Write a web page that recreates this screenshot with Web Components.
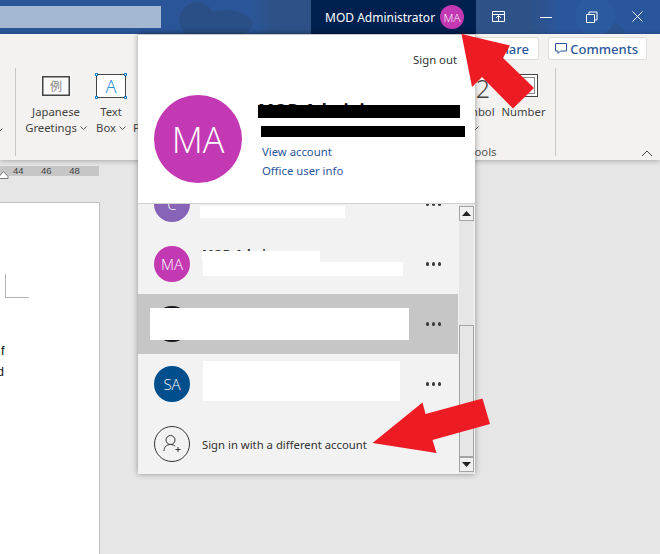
<!DOCTYPE html>
<html lang="en"><head><meta charset="utf-8"><title>Word account menu</title>
<style>
html,body{margin:0;padding:0;width:660px;height:554px;overflow:hidden;background:#e6e6e6}
body{font-family:"Noto Sans","Open Sans",sans-serif}
</style></head>
<body>
<app-shell>
  <title-bar></title-bar>
  <ribbon-bar></ribbon-bar>
  <doc-area></doc-area>
  <account-popup></account-popup>
  <red-arrows></red-arrows>
</app-shell>
<script>
function def(name, css, html, init){
  customElements.define(name, class extends HTMLElement{
    constructor(){super();const r=this.attachShadow({mode:'open'});r.innerHTML='<style>'+css+'</style>'+(typeof html==='function'?html(this):html);}
    connectedCallback(){ if(init) init(this); }
  });
}
const chev='<svg width="7" height="4" viewBox="0 0 7 4" style="vertical-align:2px"><path d="M.5.5l3 3 3-3" fill="none" stroke="#555" stroke-width="1"/></svg>';

def('app-shell',`:host{display:flex;flex-direction:column;position:relative;width:660px;height:554px;overflow:hidden}`,`<slot></slot>`);

def('user-avatar',`:host{display:flex;align-items:center;justify-content:center;border-radius:50%;color:#fff;font-family:"Open Sans","Noto Sans",sans-serif;font-weight:300;flex:none;overflow:hidden}`,
  `<slot></slot>`,
  el=>{const s=+el.getAttribute('size');el.style.width=el.style.height=s+'px';el.style.background=el.getAttribute('color');el.style.fontSize=el.getAttribute('fs')+'px';});

def('title-bar',`
:host{display:flex;height:34px;flex:none;align-items:stretch;color:#fff;font-size:12px;
 background:
  radial-gradient(circle 18px at 197px 20px,#2a4f86 97%,transparent),
  radial-gradient(ellipse 28px 14px at 225px 24px,#2a4f86 97%,transparent),
  radial-gradient(circle 20px at 595px 16px,#2b5a9e 97%,transparent),
  radial-gradient(circle 13px at 612px 36px,#29528f 97%,transparent),
  linear-gradient(90deg,#2a5699 0,#2a5699 250px,#2e5288 275px,#2e5288 530px,#2a569c 560px,#2a569c 100%);}
.search{width:161px;margin:6px 0;background:#a5b8d2}
.sp{flex:1}
.acct{width:165px;background:#002050;display:flex;align-items:center;padding-left:14px;box-sizing:border-box}
.name{width:115px}
.ctl{display:flex;align-items:center;width:184px}
svg{display:block}
`,`<div class="search"></div><div class="sp"></div>
<div class="acct"><span class="name">MOD Administrator</span><user-avatar size="24" color="#c239b3" fs="11.5">MA</user-avatar></div>
<div class="ctl">
 <svg width="184" height="34" viewBox="0 0 184 34" fill="none" stroke="#fff" stroke-width="1">
  <path d="M16.5 11.5h12v10h-12zM16.5 14.5h12M22.5 21v-5M20 18l2.5-2.5 2.500 2.500"/>
  <path d="M64 17.500h12"/>
  <path d="M110.500 14.500h8v8h-8zM113 14.500v-2.500h8v8h-2.500"/>
  <path d="M156.500 11.500l10 10M166.500 11.500l-10 10"/>
 </svg>
</div>`);

def('rb-button',`:host{display:flex;align-items:center;height:23px;background:#fff;border:1px solid #e1dfdd;border-radius:2px;box-sizing:border-box;color:#2b579a;font-size:13px;font-weight:500;justify-content:flex-end;gap:3px}`,`<slot></slot>`);

def('rb-tool',`
:host{display:flex;flex-direction:column;align-items:center;flex:none;color:#444;font-size:11.3px;line-height:16px}
.i{height:37px;display:flex;align-items:center;justify-content:center;margin-top:7px}
.t{white-space:nowrap;text-align:center}
`,`<div class="i"><slot name="icon"></slot></div><div class="t"><slot></slot></div>`);

def('ribbon-bar',`
:host{display:block;height:126px;flex:none;background:#f3f2f1;box-shadow:0 1px 5px rgba(0,0,0,.28);position:relative;z-index:1;box-sizing:border-box;color:#444}
.top{display:flex;justify-content:flex-end;gap:9px;padding:3px 13px 0 0;height:26px;box-sizing:border-box}
.share{width:90px;padding-right:9px}
.com{width:99px;padding-right:8px}
.row{display:flex;height:100px}
.sep{width:1px;height:88px;margin-top:8px;background:#c8c6c4;flex:none}
.ic{display:block;box-sizing:border-box}
.stub{width:15px;flex:none;padding-top:68px;overflow:hidden;box-sizing:border-box}
.sym{font-size:25px;font-weight:300;line-height:22px;color:#444;padding-left:16px;display:block;height:22px;margin-top:4px}
.lab{font-size:11px;color:#555;flex:none}
`,`<div class="top">
 <rb-button class="share">Share</rb-button>
 <rb-button class="com"><svg width="12" height="12" viewBox="0 0 12 12" fill="none" stroke="#2b579a"><path d="M.5.500h11v7.500h-6l-2.500 2.500v-2.500h-2.500z"/></svg>Comments</rb-button>
</div>
<div class="row">
 <div class="stub"><svg width="3" height="4" viewBox="0 0 3 4" style="display:block"><path d="M-3.500.5l3 3 3-3" fill="none" stroke="#555"/></svg></div>
 <div class="sep"></div>
 <rb-tool style="width:60px;margin-left:10px"><svg slot="icon" width="28" height="20" viewBox="0 0 28 20" class="ic"><rect x=".75" y=".75" width="26.500" height="18.500" fill="#f8f8f8" stroke="#444" stroke-width="1.500"/><text x="14" y="15" text-anchor="middle" font-size="12" fill="#8a8a8a" font-family="Noto Sans CJK JP,sans-serif">例</text></svg>Japanese<br>Greetings ${chev}</rb-tool>
 <rb-tool style="width:40px;margin-left:5px"><svg slot="icon" width="32" height="26" viewBox="0 0 32 26" class="ic"><rect x="1.500" y="1.500" width="29" height="23" fill="#fff" stroke="#444" stroke-width="1"/><text x="16" y="20" text-anchor="middle" font-size="18" fill="#2e8bd6" font-family="Noto Sans,sans-serif" font-weight="300">A</text><g fill="#fff" stroke="#1f84d2"><rect x=".5" y=".5" width="2" height="2"/><rect x="29.500" y=".5" width="2" height="2"/><rect x=".5" y="23.500" width="2" height="2"/><rect x="29.500" y="23.500" width="2" height="2"/></g></svg>Text<br>Box ${chev}</rb-tool>
 <rb-tool style="width:10px;margin-left:2px;align-items:flex-start"><span slot="icon"></span><br>P</rb-tool>
 <rb-tool style="width:44px;margin-left:310px"><span slot="icon" class="sym">2</span>Symbol<br><span style="margin-right:-2px">${chev}</span></rb-tool>
 <rb-tool style="width:43px;margin-left:5px"><svg slot="icon" width="28" height="23" viewBox="0 0 28 23" class="ic"><rect x=".5" y=".5" width="27" height="22" fill="#fff" stroke="#444"/><rect x="3.500" y="3.500" width="21" height="16" fill="none" stroke="#888"/></svg>Number</rb-tool>
 <div class="sep" style="margin-left:10px"></div>
 <svg width="12" height="7" viewBox="0 0 12 7" style="position:absolute;left:641px;top:116px" fill="none" stroke="#444"><path d="M1 6l5-5 5 5"/></svg>
 <span class="lab" style="position:absolute;left:469px;top:110px;font-size:11.300px">Tools</span>
</div>`);

def('doc-area',`
:host{display:block;flex:1;background:#e6e6e6;padding-top:6px;box-sizing:border-box;overflow:hidden}
.ruler{width:99px;height:10px;background:#c6c6c6;display:flex;font-size:9.500px;line-height:10px;color:#444;position:relative;font-family:"Liberation Sans",sans-serif;padding-left:13px;box-sizing:border-box;gap:17.500px}
.mark{position:absolute;left:0;top:5px}
.page{width:99px;height:360px;margin-top:26px;background:#fff;border-top:1px solid #c0c0c0;border-right:1px solid #c0c0c0;box-sizing:content-box;overflow:hidden;font-family:"Liberation Sans",sans-serif;font-size:12.500px;color:#111}
.crop{width:23px;height:23px;margin:71px 0 0 5px;border-left:1px solid #b4b4b4;border-bottom:1px solid #b4b4b4}
.l{height:21px;line-height:21px}
`,`<div class="ruler"><svg class="mark" width="9" height="8" viewBox="0 0 9 8"><path d="M-1 7.500v-2l4.500-5 4.500 5v2z" fill="#fff" stroke="#777"/></svg><span>44</span><span>46</span><span>48</span></div>
<div class="page"><div class="crop"></div><div class="l" style="margin-top:43px;padding-left:1px">f</div><div class="l" style="margin-left:-3px">d</div></div>`);

def('account-row',`
:host{display:flex;align-items:center;height:60px;padding-left:16px;box-sizing:border-box;position:relative;flex:none;overflow:hidden}
:host([sel]){background:#c6c6c6}
.d{margin-left:auto;margin-right:17px;display:flex;gap:2.500px}
:host([nodots]) .d{display:none}
.d i{width:3.500px;height:3.500px;border-radius:50%;background:#3c3c3c}
.tx{margin-left:12px;font-size:11.3px;color:#333;white-space:nowrap}
::slotted(.w){position:absolute;background:#fff}
`,`<slot name="av"></slot><div class="tx"><slot name="tx"></slot></div><div class="d"><i></i><i></i><i></i></div><slot></slot>`);

def('account-popup',`
:host{display:block;position:absolute;left:138px;top:34px;width:337px;height:440px;background:#f2f2f2;box-shadow:0 0 6px rgba(0,0,0,.38);z-index:2;color:#333;font-size:11.3px}
.hd{height:170px;box-sizing:border-box;background:#fff;border-top:1px solid #c8c8c8;border-bottom:1px solid #d2d2d2;position:relative}
.so{text-align:right;padding:16px 18px 0 0;line-height:18px;height:18px}
.bd{display:flex;padding:26px 0 0 16px;gap:20px}
.txt{flex:1}
.nm{font-weight:700;font-size:17px;line-height:20px;color:#111;white-space:nowrap;margin-left:-4px;margin-top:6px}
.blk{position:absolute;background:#000}
a{display:block;color:#2b579a;text-decoration:none;line-height:19px}
.ls{display:flex;height:270px}
.col{width:320px;height:270px;overflow:hidden;display:flex;flex-direction:column;flex:none}
.first{margin-top:-30px}
.sb{width:15px;margin-left:1px;background:#e6e6e6;display:flex;flex-direction:column;padding-top:2px;box-sizing:border-box;height:270px}
.b{height:15px;border:1px solid #a4a4a4;box-sizing:border-box;background:#f0f0f0;display:flex;align-items:center;justify-content:center;flex:none}
.th{height:132px;margin-top:104px;border:1px solid #a4a4a4;box-sizing:border-box;flex:none}
.lk{position:absolute;left:124px;top:107px}
.peek{display:block;transform:translateY(-10px);font-weight:700;font-size:12px}
`,`<div class="hd"><div class="so">Sign out</div>
 <div class="bd"><user-avatar size="88" color="#c239b3" fs="36">MA</user-avatar>
  <div class="txt"><div class="nm">MOD Administrator</div></div></div>
 <div class="blk" style="left:120px;top:70px;width:202px;height:13px"></div>
 <div class="blk" style="left:123px;top:91px;width:204px;height:11px"></div>
 <div class="lk"><a>View account</a><a>Office user info</a></div>
</div>
<div class="ls">
 <div class="col">
  <account-row class="first"><user-avatar slot="av" size="36" color="#8764b8" fs="15">C</user-avatar><span class="w" style="left:62px;top:32px;width:145px;height:12px"></span></account-row>
  <account-row><user-avatar slot="av" size="36" color="#c239b3" fs="15">MA</user-avatar><span slot="tx" class="peek">MOD Admin</span><span class="w" style="left:64px;top:17px;width:118px;height:11px"></span><span class="w" style="left:65px;top:28px;width:200px;height:14px"></span></account-row>
  <account-row sel><user-avatar slot="av" size="36" color="#14161c" fs="15"></user-avatar><span class="w" style="left:12px;top:14px;width:259px;height:32px"></span></account-row>
  <account-row><user-avatar slot="av" size="36" color="#004e8c" fs="15">SA</user-avatar><span class="w" style="left:65px;top:7px;width:197px;height:40px"></span></account-row>
  <account-row nodots><svg slot="av" width="36" height="36" viewBox="0 0 36 36" fill="none" stroke="#333" style="display:block"><circle cx="18" cy="18" r="17.500"/><circle cx="16.500" cy="14" r="4.500"/><path d="M10 25c0-4 2.500-6.500 6.500-6.500 2 0 3.600.6 4.700 1.700"/><path d="M21.500 23.500h5M24 21v5"/></svg><span slot="tx">Sign in with a different account</span></account-row>
 </div>
 <div class="sb">
  <div class="b"><svg width="9" height="5" viewBox="0 0 9 5"><path d="M4.500 0L9 5H0z" fill="#222"/></svg></div>
  <div class="th"></div>
  <div class="b"><svg width="9" height="5" viewBox="0 0 9 5"><path d="M0 0h9L4.500 5z" fill="#222"/></svg></div>
 </div>
</div>`);

def('red-arrows',`:host{display:block;position:absolute;left:0;top:0;width:660px;height:554px;z-index:3;pointer-events:none}svg{display:block}`,
`<svg width="660" height="554" viewBox="0 0 660 554"><g fill="#ed1c24">
 <path d="M461.500 34L510 45.500 503 58 534 88 513 108.500 482 77 472 87z"/>
 <path d="M372.500 443L422.500 402.500 425.500 414 482.500 398.500 490 424 432.500 440 436.500 453z"/>
</g></svg>`);
</script>
</body></html>
